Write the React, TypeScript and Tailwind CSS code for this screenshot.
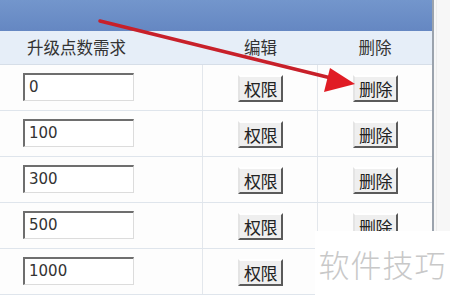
const rows = ["0", "100", "300", "500", "1000"];

const cjk = "font-['Noto_Sans_CJK_SC',sans-serif]";

function OldButton({ label }: { label: string }) {
  return (
    <button
      className={`h-[27px] w-[45px] border-2 border-t-white border-l-[#e4e4e4] border-r-[#5a5a5a] border-b-[#5a5a5a] bg-[#efefef] text-[17px] leading-none tracking-[-0.5px] text-[#222] ${cjk}`}
    >
      {label}
    </button>
  );
}

function Row({ value }: { value: string }) {
  return (
    <div className="flex h-[46px] border-b border-[#dfe5ec] bg-[#fdfdfd]">
      <div className="flex w-[203px] items-start border-r border-[#e3e7ec] pt-[8px] pl-[23px]">
        <div className="flex h-[28px] w-[111px] items-center border-t-2 border-l-2 border-t-[#6e6e6e] border-l-[#6e6e6e] border-r border-b border-r-[#dcdcdc] border-b-[#dcdcdc] bg-white pl-[4px] font-['DejaVu_Sans',sans-serif] text-[15px] text-[#333]">
          {value}
        </div>
      </div>
      <div className="flex w-[115px] items-start border-r border-[#e3e7ec] pt-[10px] pl-[35px]">
        <OldButton label="权限" />
      </div>
      <div className="flex w-[114px] items-start pt-[10px] pl-[35px]">
        <OldButton label="删除" />
      </div>
    </div>
  );
}

export default function App() {
  return (
    <div className="relative h-[298px] w-[450px] overflow-hidden bg-[#f7f7f7]">
      <div className="flex h-full">
        <div className="flex w-[434px] flex-col border-r-2 border-[#9ba3ad] bg-white">
          <div className="h-[31px] bg-gradient-to-b from-[#7396cc] to-[#6587c2]" />
          <div
            className={`flex h-[34px] border-b border-[#d6dee8] bg-[#e6eef8] text-[16.5px] text-[#333] ${cjk}`}
          >
            <div className="flex w-[203px] items-center justify-center pr-[50px]">升级点数需求</div>
            <div className="flex w-[115px] items-center justify-center">编辑</div>
            <div className="flex w-[114px] items-center justify-center">删除</div>
          </div>
          {rows.map((r) => (
            <Row key={r} value={r} />
          ))}
        </div>
        <div className="ml-[2px] w-px bg-[#ececec]" />
      </div>

      <svg className="pointer-events-none absolute inset-0" width="450" height="298">
        <line x1="100" y1="21" x2="335" y2="79" stroke="#c8202a" strokeWidth="3.5" strokeLinecap="round" />
        <polygon points="355,84 330,68 324,92" fill="#e01c24" />
      </svg>

      <div className="absolute right-0 bottom-0 flex h-[67px] w-[135px] items-center justify-center bg-white">
        <span className={`text-[31px] font-light tracking-[1px] text-[#c8c8c8] ${cjk}`}>软件技巧</span>
      </div>
    </div>
  );
}
